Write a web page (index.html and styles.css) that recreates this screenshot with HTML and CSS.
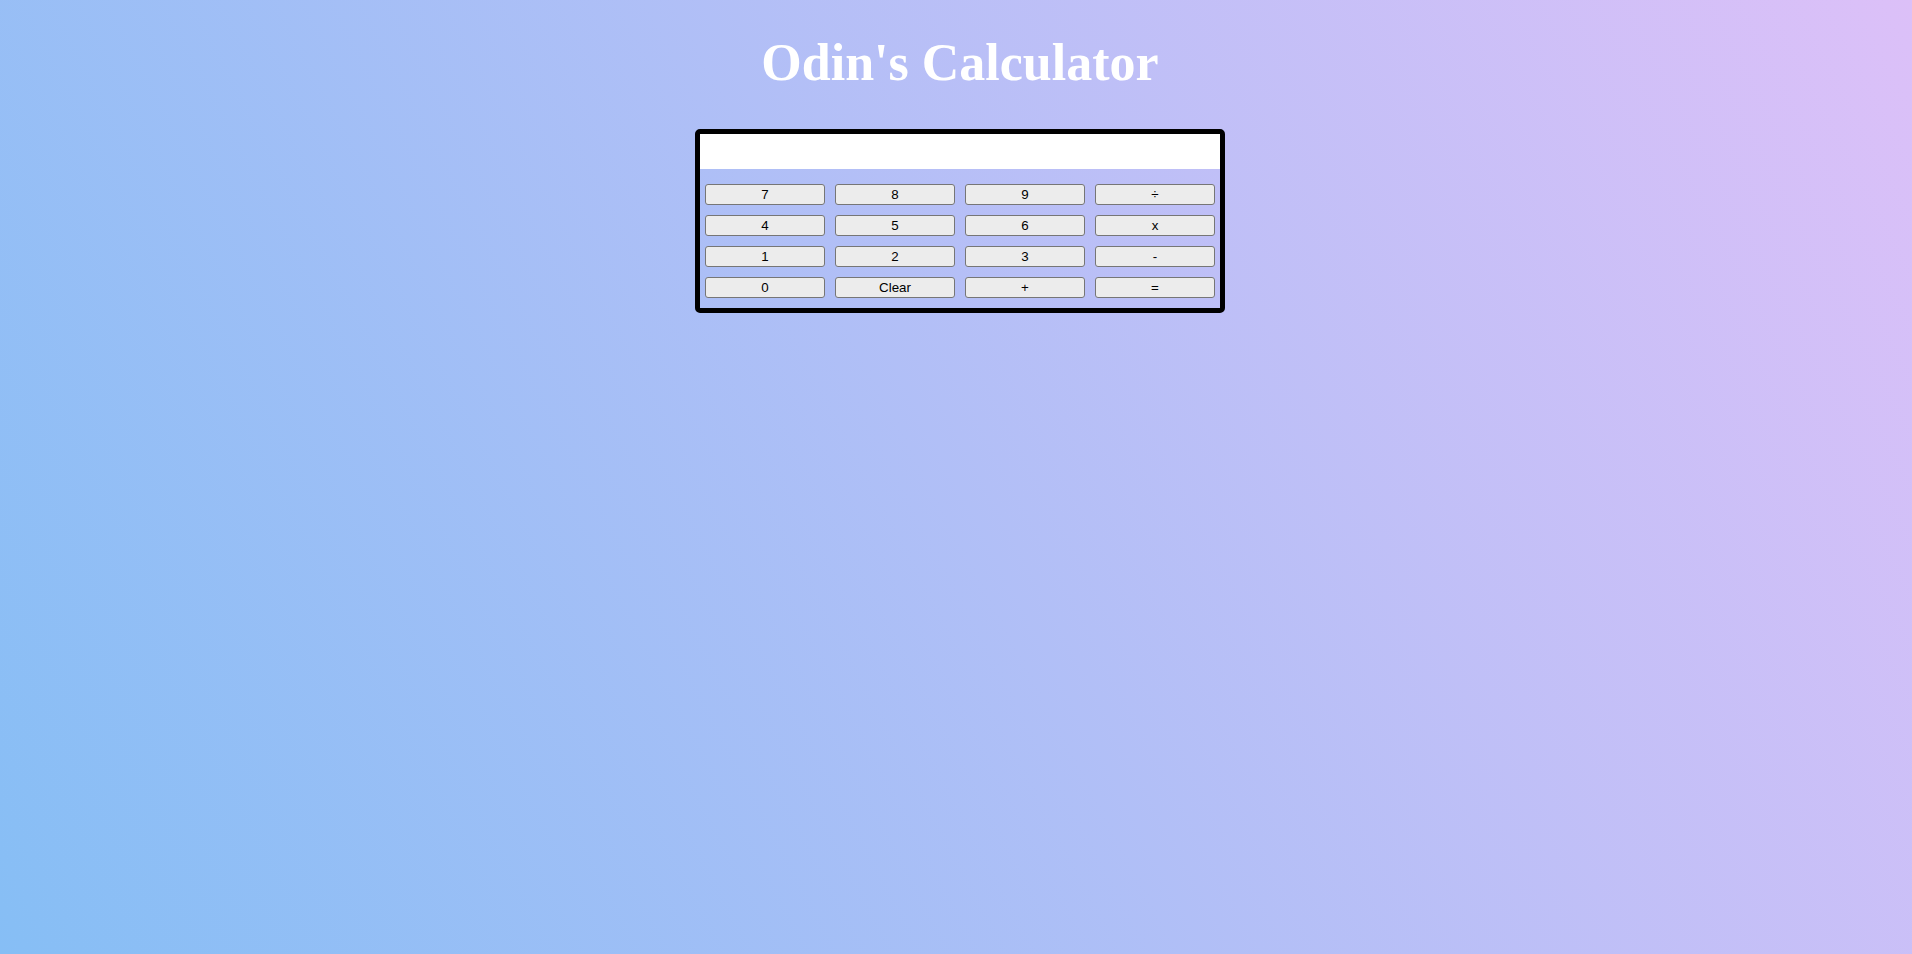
FILE: index.html
```html
<!DOCTYPE html>
<html lang="en">
<head>
<meta charset="utf-8">
<title>Odin's Calculator</title>
<link rel="stylesheet" href="styles.css">
</head>
<body>
  <h1 class="title">Odin's Calculator</h1>
  <div class="wrap">
    <div class="calc">
      <div class="display"></div>
      <div class="keys">
        <div class="row">
          <button class="key">7</button>
          <button class="key">8</button>
          <button class="key">9</button>
          <button class="key">÷</button>
        </div>
        <div class="row">
          <button class="key">4</button>
          <button class="key">5</button>
          <button class="key">6</button>
          <button class="key">x</button>
        </div>
        <div class="row">
          <button class="key">1</button>
          <button class="key">2</button>
          <button class="key">3</button>
          <button class="key">-</button>
        </div>
        <div class="row">
          <button class="key">0</button>
          <button class="key">Clear</button>
          <button class="key">+</button>
          <button class="key">=</button>
        </div>
      </div>
    </div>
  </div>
</body>
</html>
```
FILE: styles.css
```css
html {
  min-height: 100%;
  background-color: #8ec5fc;
  background-image: linear-gradient(62deg, #86bef5 0%, #dcc0f8 100%);
}

body {
  margin: 0;
  min-height: 954px;
  font-family: "Liberation Serif", "Times New Roman", serif;
}

.title {
  margin: 0;
  padding-top: 34px;
  padding-left: 8px;
  height: 96px;
  box-sizing: border-box;
  text-align: center;
  color: #ffffff;
  font-family: "Liberation Serif", "Times New Roman", serif;
  font-weight: bold;
  font-size: 52px;
  line-height: 57px;
}

.wrap {
  display: flex;
  justify-content: center;
  padding-top: 33px;
}

.calc {
  width: 520px;
  margin-left: 8px;
  border: 5px solid #000000;
  border-radius: 5px;
}

.display {
  height: 35px;
  background: #ffffff;
}

.keys {
  padding: 10px 0 5px;
}

.row {
  display: flex;
}

.key {
  width: 120px;
  height: 21px;
  margin: 5px;
  padding: 0;
  box-sizing: border-box;
  background: #ececec;
  border: 1px solid #767676;
  border-radius: 3px;
  color: #000000;
  font-family: "Liberation Sans", Arial, sans-serif;
  font-size: 13.33px;
  line-height: 19px;
  text-align: center;
}
```
